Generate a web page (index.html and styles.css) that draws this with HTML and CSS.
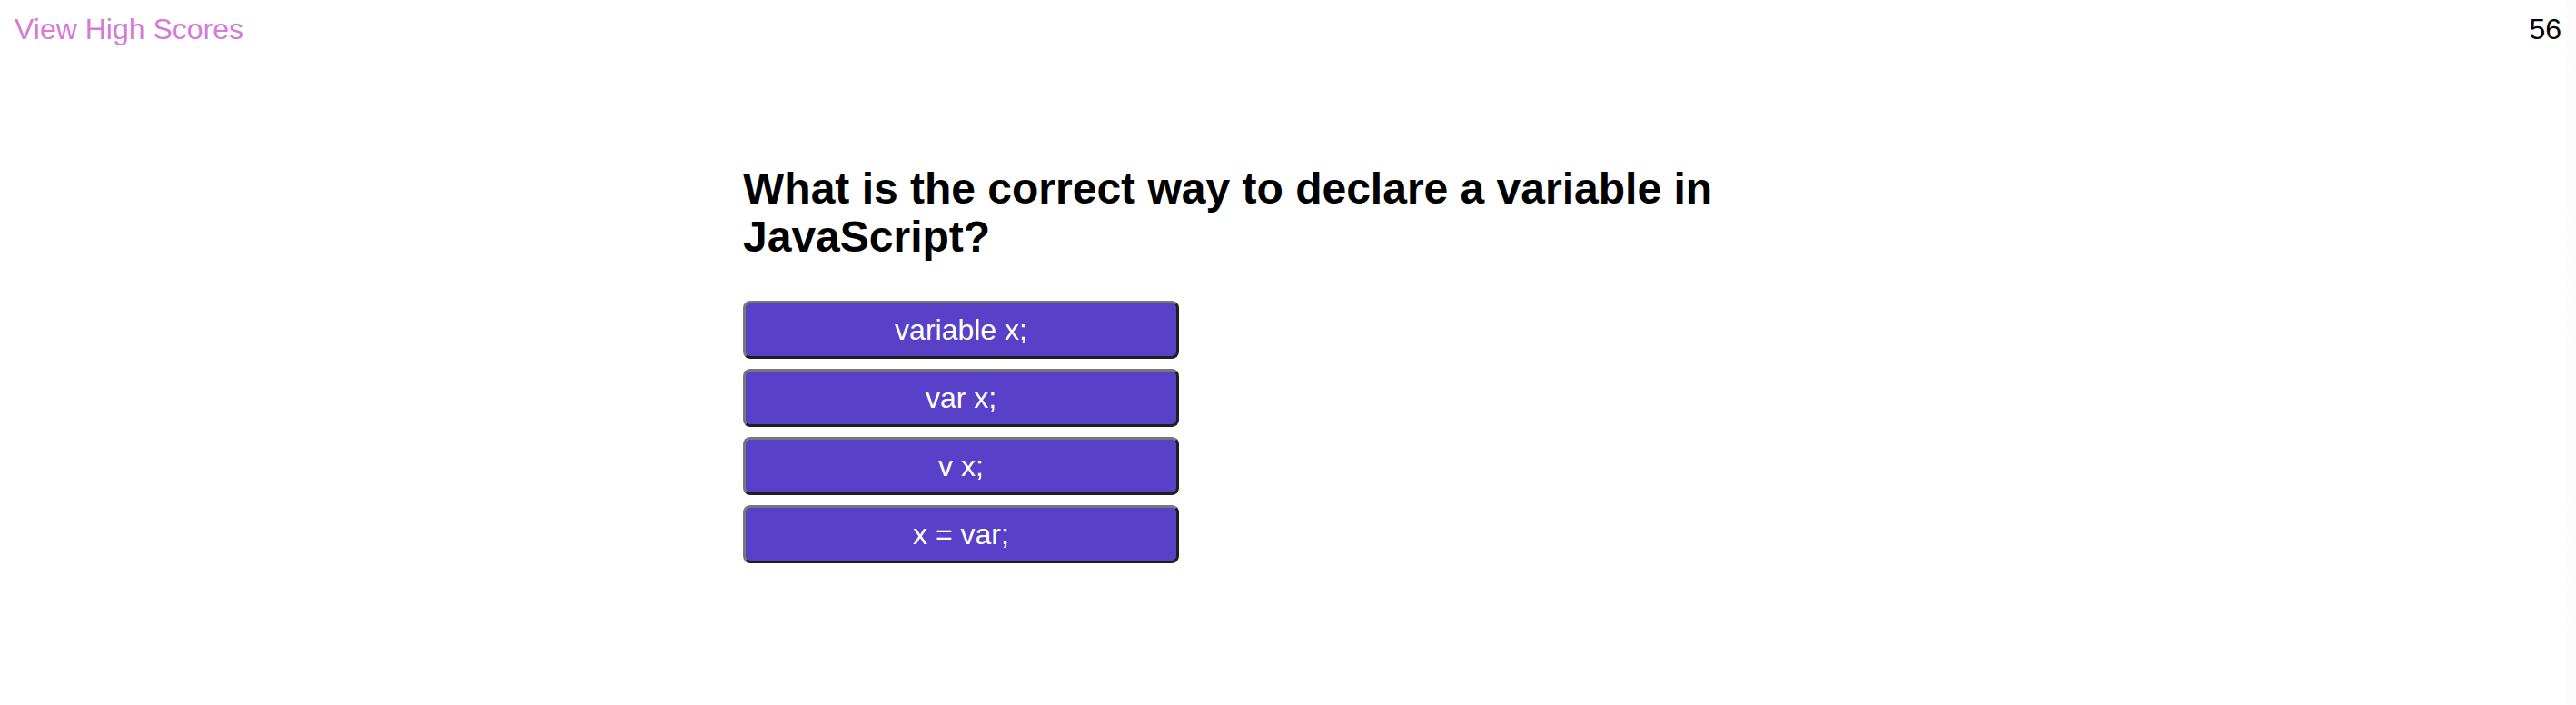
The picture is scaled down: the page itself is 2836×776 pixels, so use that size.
FILE: index.html
```html
<!DOCTYPE html>
<html lang="en">
<head>
<meta charset="utf-8">
<title>Code Quiz</title>
<link rel="stylesheet" href="styles.css">
</head>
<body>
<header class="topbar">
  <a class="scores-link" href="#">View High Scores</a>
  <span class="timer">56</span>
</header>
<main class="quiz">
  <h2 class="question">What is the correct way to declare a variable in JavaScript?</h2>
  <div class="choices">
    <button class="choice">variable x;</button>
    <button class="choice">var x;</button>
    <button class="choice">v x;</button>
    <button class="choice">x = var;</button>
  </div>
</main>
</body>
</html>
```
FILE: styles.css
```css
html {
  background: linear-gradient(to left, #fbfbfb 0, #fdfdfd 11px, #ffffff 11px);
  min-height: 100%;
}
body {
  margin: 16px;
  font-family: "Liberation Sans", Arial, Helvetica, sans-serif;
  font-size: 32px;
  color: #000;
}
.topbar {
  display: flex;
  justify-content: space-between;
  align-items: flex-start;
  line-height: 32px;
}
.scores-link {
  color: #d57bd6;
  text-decoration: none;
}
.timer {
  color: #000;
}
.quiz {
  width: 1200px;
  margin: 0 auto;
  padding-top: 134px;
}
.question {
  margin: 0 0 43px 0;
  font-size: 48px;
  font-weight: bold;
  line-height: 1.1;
}
.choices {
  display: flex;
  flex-direction: column;
  align-items: flex-start;
  gap: 11px;
}
.choice {
  box-sizing: border-box;
  width: 480px;
  height: 64px;
  padding: 0 10px;
  border-width: 3px;
  border-style: solid;
  border-color: #777777 #1f1f1f #1f1f1f #777777;
  border-radius: 8px;
  background: #5840c9;
  color: #ffffff;
  font-family: "Liberation Sans", Arial, Helvetica, sans-serif;
  font-size: 32px;
  line-height: 38px;
  text-align: center;
  cursor: pointer;
}
```
